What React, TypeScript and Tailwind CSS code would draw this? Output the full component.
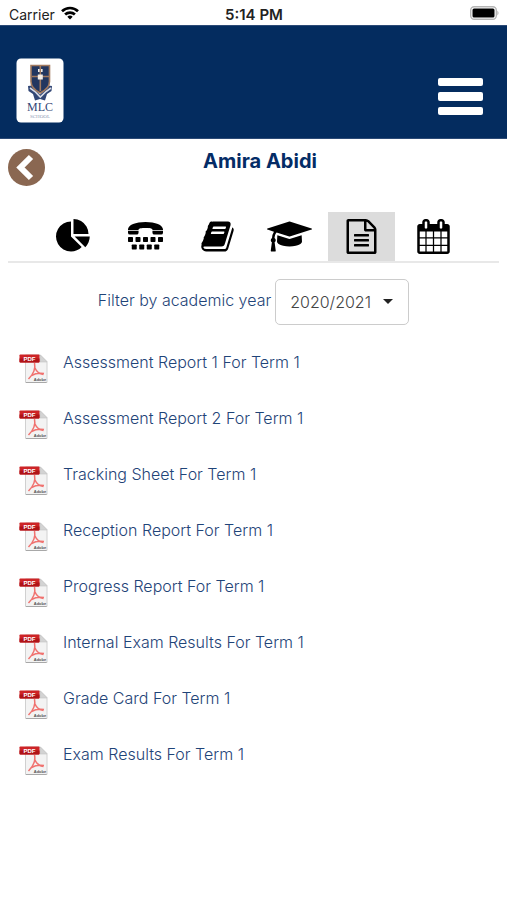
import React from "react";

type Tab = { label: string; viewBox: string; width: string; body: React.ReactNode };

const upperKeys = [0, 384, 768, 1152, 1536];
const lowerKeys = [192, 576, 960, 1344];

const tabs: Tab[] = [
  {
    label: "Overview",
    viewBox: "0 0 1792 1792",
    width: "w-[35px]",
    body: (
      <path d="M768 890l546 546q-106 108-247.500 168t-298.500 60q-209 0-385.500-103t-279.500-279.500-103-385.500 103-385.500 279.500-279.500 385.500-103v762zm187 6h773q0 157-60 298.500t-168 247.500zm709-128h-768v-768q209 0 385.500 103t279.500 279.500 103 385.500z" />
    ),
  },
  {
    label: "Contact",
    viewBox: "0 0 1792 1792",
    width: "w-[35px]",
    body: (
      <>
        <path d="M0 540C0 290 400 148 896 148s896 142 896 392v30h-540v-20c0-70-160-90-356-90s-356 20-356 90v20H0z" />
        <path d="M0 610h540v90q0 98-98 98H98Q0 798 0 700zM1252 610h540v90q0 98-98 98h-344q-98 0-98-98z" />
        {upperKeys.map((x) => (
          <rect key={x} x={x} y="920" width="256" height="256" rx="36" />
        ))}
        {lowerKeys.map((x) => (
          <rect key={x} x={x} y="1304" width="256" height="256" rx="36" />
        ))}
      </>
    ),
  },
  {
    label: "Homework",
    viewBox: "0 0 1792 1792",
    width: "w-[35px]",
    body: (
      <path d="M1703 478q40 57 18 129l-275 906q-19 64-76.500 107.500t-122.500 43.500h-923q-77 0-148.500-53.500t-99.500-131.500q-24-67-2-127 0-4 3-27t4-37q1-8-3-21.500t-3-19.500q2-11 8-21t16.500-23.500 16.500-23.500q23-38 45-91.500t30-91.500q3-10 .5-30t-.5-28q3-11 17-28t17-23q21-36 42-92t25-90q1-9-2.500-32t.5-28q4-13 22-30.500t22-22.500q19-26 42.500-84.500t27.500-96.500q1-8-3-25.500t-2-26.500q2-8 9-18t18-23 17-21q8-12 16.500-30.500t15-35 16-36 19.500-32 26.500-23.500 36-11.500 47.500 5.500l-1 3q38-9 51-9h761q74 0 114 56t18 130l-274 906q-36 119-71.500 153.500t-128.500 34.500h-869q-27 0-38 15-11 16-1 43 24 70 144 70h923q29 0 56-15.500t35-41.500l300-987q7-22 5-57 38 15 59 43zm-1064 2q-4 13 2 22.500t20 9.500h608q13 0 25.500-9.500t16.500-22.500l21-64q4-13-2-22.500t-20-9.500h-608q-13 0-25.500 9.500t-16.500 22.500zm-83 256q-4 13 2 22.500t20 9.500h608q13 0 25.500-9.500t16.500-22.500l21-64q4-13-2-22.500t-20-9.500h-608q-13 0-25.500 9.500t-16.500 22.500z" />
    ),
  },
  {
    label: "Grades",
    viewBox: "0 0 2304 1792",
    width: "w-[45px]",
    body: (
      <path d="M1774 836l18 316q4 69-82 128t-235 93.500-323 34.500-323-34.500-235-93.500-82-128l18-316 574 181q22 7 48 7t48-7zm530-324q0 23-22 31l-1120 352q-4 1-10 1t-10-1l-652-206q-43 34-71 111.500t-34 178.500q63 36 63 109 0 69-58 107l58 433q2 14-8 25-9 11-24 11h-192q-15 0-24-11-10-11-8-25l58-433q-58-38-58-107 0-73 65-111 11-207 98-330l-333-104q-22-8-22-31t22-31l1120-352q4-1 10-1t10 1l1120 352q22 8 22 31z" />
    ),
  },
  {
    label: "Reports",
    viewBox: "0 0 1792 1792",
    width: "w-[35px]",
    body: (
      <path d="M1596 380q28 28 48 76t20 88v1152q0 40-28 68t-68 28h-1344q-40 0-68-28t-28-68v-1600q0-40 28-68t68-28h896q40 0 88 20t76 48zm-444-244v376h376q-10-29-22-41l-313-313q-12-12-41-22zm384 1528v-1024h-416q-40 0-68-28t-28-68v-416h-768v1536h1280zm-1024-864q0-14 9-23t23-9h704q14 0 23 9t9 23v64q0 14-9 23t-23 9h-704q-14 0-23-9t-9-23v-64zm736 224q14 0 23 9t9 23v64q0 14-9 23t-23 9h-704q-14 0-23-9t-9-23v-64q0-14 9-23t23-9h704zm0 256q14 0 23 9t9 23v64q0 14-9 23t-23 9h-704q-14 0-23-9t-9-23v-64q0-14 9-23t23-9h704z" />
    ),
  },
  {
    label: "Calendar",
    viewBox: "0 0 1792 1792",
    width: "w-[35px]",
    body: (
      <path d="M192 1664h288v-288h-288v288zm352 0h320v-288h-320v288zm-352-352h288v-320h-288v320zm352 0h320v-320h-320v320zm-352-384h288v-288h-288v288zm736 736h320v-288h-320v288zm-384-736h320v-288h-320v288zm768 736h288v-288h-288v288zm-384-352h320v-320h-320v320zm-352-864v-288q0-13-9.500-22.500t-22.500-9.500h-64q-13 0-22.500 9.500t-9.500 22.500v288q0 13 9.500 22.500t22.500 9.500h64q13 0 22.500-9.500t9.500-22.500zm736 864h288v-320h-288v320zm-384-384h320v-288h-320v288zm384 0h288v-288h-288v288zm32-480v-288q0-13-9.500-22.500t-22.500-9.500h-64q-13 0-22.500 9.500t-9.500 22.500v288q0 13 9.500 22.500t22.500 9.500h64q13 0 22.500-9.500t9.500-22.500zm384-64v1280q0 52-38 90t-90 38h-1408q-52 0-90-38t-38-90v-1280q0-52 38-90t90-38h128v-96q0-66 47-113t113-47h64q66 0 113 47t47 113v96h384v-96q0-66 47-113t113-47h64q66 0 113 47t47 113v96h128q52 0 90 38t38 90z" />
    ),
  },
];

const reports = [
  "Assessment Report 1 For Term 1",
  "Assessment Report 2 For Term 1",
  "Tracking Sheet For Term 1",
  "Reception Report For Term 1",
  "Progress Report For Term 1",
  "Internal Exam Results For Term 1",
  "Grade Card For Term 1",
  "Exam Results For Term 1",
];

function StatusBar() {
  return (
    <div className="grid h-[25px] grid-cols-3 items-center pt-1 pr-2 pl-[9px] text-sm leading-5 text-[#222]">
      <div className="flex items-center gap-[6px]">
        <span>Carrier</span>
        <svg viewBox="0 0 18 14" className="mb-[3px] h-[14px] w-[18px]" fill="none" stroke="#000" strokeWidth="2.7" aria-hidden="true">
          <path d="M1 5.200C5.500.900 12.500.900 17 5.200" />
          <path d="M4.100 8.500C6.800 5.900 11.200 5.900 13.900 8.500" />
          <path d="M9 13.500L6.300 10.700Q9 8.500 11.700 10.700Z" fill="#000" stroke="none" />
        </svg>
      </div>
      <span className="text-center text-[15px] font-semibold">5:14 PM</span>
      <svg viewBox="0 0 30 14" className="mb-1 h-[14px] w-[30px] justify-self-end" aria-hidden="true">
        <rect x="1.700" y="0.700" width="25.600" height="12.600" rx="3.500" fill="#fff" stroke="#b5b5b5" strokeWidth="1.400" />
        <rect x="3.500" y="2.500" width="22" height="9" rx="1.500" />
        <path d="M28.300 4.500q2.500 2.500 0 5z" fill="#b5b5b5" />
      </svg>
    </div>
  );
}

function SchoolCrest() {
  return (
    <svg viewBox="0 0 48 65" className="h-[65px] w-[48px]" role="img" aria-label="MLC School">
      <rect x="0.500" y="0.500" width="47" height="64" rx="4.500" fill="#fff" />
      <path d="M12 28l4-.5 1.500 3 6.500 6 6.500-6 1.500-3 4 .5-.5 5-4.500 3-2 6.500-5-1.500-5 1.500-2-6.500-4.500-3z" fill="#324776" />
      <path d="M14 30l5 3.500 5.300 5.500 5.700-5.500 5-3.500" fill="none" stroke="#d9dce5" strokeWidth="1.600" />
      <path d="M15 7.500h18.500v16q0 7-9.300 11.500Q15 30.500 15 23.500z" fill="#233760" stroke="#a27a5f" strokeWidth="1.600" />
      <path d="M24.300 8v25M16 18.500h17" stroke="#a27a5f" strokeWidth="1.600" />
      <path d="M21.800 16.500h5v5h-5zM22 11h1.600v3H22zM25 11h1.600v3H25z" fill="#f4eee7" />
      <text x="24" y="53" textAnchor="middle" fontSize="12" fill="#324776" className="font-['Liberation_Serif',serif]">MLC</text>
      <text x="24" y="60" textAnchor="middle" fontSize="5" fill="#8a98b5" className="font-['Liberation_Serif',serif]">SCHOOL</text>
    </svg>
  );
}

function PdfIcon() {
  return (
    <svg viewBox="0 0 29 30" className="h-[30px] w-[29px] shrink-0" aria-hidden="true">
      <path d="M6.500 1h15l6.500 6.500V28.500H6.500z" fill="#f3f3f3" stroke="#d0d0d0" />
      <path d="M21 1v7h7z" fill="#d3d3d3" stroke="#c4c4c4" strokeWidth="0.600" />
      <path d="M7 28.500h20.500" stroke="#a8a8a8" />
      <path d="M15.500 9C17 15.500 14 20.500 9.500 25M16 14C17.500 17.500 20 20 24.500 20.500M12.500 21.500C16 19.500 20 18.800 25 19.500" fill="none" stroke="#f0726f" strokeWidth="1.500" />
      <rect x="0.500" y="0.500" width="20" height="8" rx="0.800" fill="#cd2427" />
      <path d="M.5 4.500h20v3.200q0 .8-.8.8H1.300q-.8 0-.8-.8z" fill="#b01317" />
      <text x="10.500" y="6.500" textAnchor="middle" fontSize="6" fontWeight="700" fill="#fff" className="font-['Liberation_Sans',sans-serif]">PDF</text>
      <text x="21" y="27" textAnchor="middle" fontSize="4" fontWeight="700" fill="#555" className="font-['Liberation_Sans',sans-serif]">Adobe</text>
    </svg>
  );
}

export default function App() {
  return (
    <div className="min-h-screen bg-white font-['Inter','Liberation_Sans',sans-serif]">
      <StatusBar />
      <header className="flex items-start justify-between border-y border-[#2c4a76] bg-[#042c5f] pt-8 pr-6 pb-[15px] pl-4">
        <SchoolCrest />
        <button type="button" aria-label="Open menu" className="mt-5 flex w-[45px] flex-col gap-[6px]">
          <span className="h-2 rounded-[2px] bg-white" />
          <span className="h-[9px] rounded-[2px] bg-white" />
          <span className="h-2 rounded-[2px] bg-white" />
        </button>
      </header>

      <main className="px-2">
        <div className="grid grid-cols-[37px_1fr_24px] pt-[10px]">
          <button type="button" aria-label="Back" className="size-[37px]">
            <svg viewBox="0 0 37 37" className="size-[37px]" aria-hidden="true">
              <circle cx="18.500" cy="18.500" r="18.500" fill="#8a6751" />
              <path d="M23 8L12.500 18.500L23 29" fill="none" stroke="#fff" strokeWidth="6" />
            </svg>
          </button>
          <h1 className="text-center text-xl leading-6 font-bold text-[#042c66]">Amira Abidi</h1>
        </div>

        <nav aria-label="Student sections" className="mt-[26px] flex justify-center gap-[5px] border-b-2 border-[#e8e8e8]">
          {tabs.map((tab) => {
            const active = tab.label === "Reports";
            return (
              <button
                key={tab.label}
                type="button"
                aria-label={tab.label}
                aria-current={active ? "page" : undefined}
                className={`flex h-[49px] w-[67px] items-center justify-center ${active ? "bg-[#dcdcdc]" : ""}`}
              >
                <svg viewBox={tab.viewBox} className={`h-[35px] ${tab.width}`} aria-hidden="true">
                  {tab.body}
                </svg>
              </button>
            );
          })}
        </nav>

        <div className="mt-4 flex justify-center gap-1 font-light">
          <label htmlFor="year" className="pt-[9px] text-base leading-6 text-[#1f4478]">
            Filter by academic year
          </label>
          <div className="relative">
            <select
              id="year"
              defaultValue="2020/2021"
              className="h-[46px] w-[134px] appearance-none rounded-[5px] border border-[#ccc] bg-white pl-[14px] text-base text-[#444]"
            >
              <option>2020/2021</option>
              <option>2019/2020</option>
            </select>
            <svg viewBox="0 0 10 5" className="pointer-events-none absolute top-5 right-4 h-[5px] w-[10px]" aria-hidden="true">
              <path d="M0 0h10L5 5z" fill="#222" />
            </svg>
          </div>
        </div>

        <ul className="mt-[25px] pl-[11px]">
          {reports.map((name) => (
            <li key={name} className="h-14">
              <a href="#report" className="flex gap-[15px] text-base leading-6 font-light text-[#1f4478]">
                <span className="pt-1">
                  <PdfIcon />
                </span>
                {name}
              </a>
            </li>
          ))}
        </ul>
      </main>
    </div>
  );
}
